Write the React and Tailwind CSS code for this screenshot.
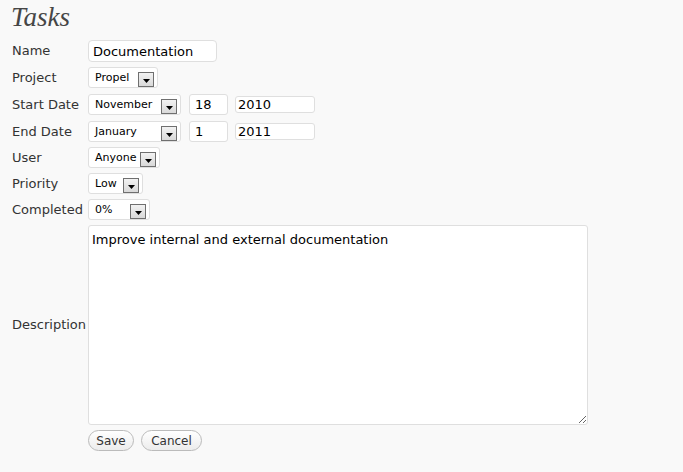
import React from 'react';

const font = { fontFamily: 'Verdana, "DejaVu Sans", sans-serif' };

const Arrow = () => (
  <span className="flex h-[15px] w-[16px] shrink-0 items-center justify-center border border-[#6f6f6f] bg-gradient-to-b from-[#f2f2f2] to-[#d9d9d9]">
    <svg width="7" height="4" viewBox="0 0 7 4" className="mt-[3px]">
      <polygon points="0,0 7,0 3.5,4" fill="#000" />
    </svg>
  </span>
);

const Select = ({ value, width }) => (
  <div
    className={`flex h-[21px] items-center justify-between rounded-[3px] border border-[#dfdfdf] bg-white pl-[6px] pr-[3px] text-[11px] text-black ${width}`}
  >
    <span className="mt-[1px]">{value}</span>
    <span className="mt-[3px]">
      <Arrow />
    </span>
  </div>
);

const Label = ({ children }) => (
  <div className="w-[76px] shrink-0 text-[13px] text-[#333]">{children}</div>
);

const Row = ({ label, className = '', children }) => (
  <div className={`flex items-center ${className}`}>
    <Label>{label}</Label>
    <div className="flex items-center">{children}</div>
  </div>
);

export default function App() {
  return (
    <div className="min-h-[472px] w-full bg-[#f9f9f9] pl-[12px]" style={font}>
      <h1
        className="-ml-[1px] pt-[2px] text-[27px] italic leading-[31px] text-[#464646]"
        style={{ fontFamily: '"Liberation Serif", Georgia, serif' }}
      >
        Tasks
      </h1>

      <div className="mt-[7px] flex flex-col">
        <Row label="Name">
          <input
            readOnly
            value="Documentation"
            className="h-[22px] w-[129px] rounded-[4px] border border-[#dfdfdf] bg-white px-[4px] text-[13px] text-black outline-none"
            style={font}
          />
        </Row>

        <Row label="Project" className="mt-[5px]">
          <Select value="Propel" width="w-[70px]" />
        </Row>

        <Row label="Start Date" className="mt-[6px]">
          <Select value="November" width="w-[93px]" />
          <div className="ml-[8px] flex h-[21px] w-[39px] items-center rounded-[3px] border border-[#dfdfdf] bg-white pl-[5px] text-[13px] text-black">
            18
          </div>
          <div className="ml-[7px] flex h-[17px] w-[80px] items-center rounded-[3px] border border-[#dfdfdf] bg-white pl-[2px] text-[13px] text-black">
            2010
          </div>
        </Row>

        <Row label="End Date" className="mt-[6px]">
          <Select value="January" width="w-[93px]" />
          <div className="ml-[8px] flex h-[21px] w-[39px] items-center rounded-[3px] border border-[#dfdfdf] bg-white pl-[5px] text-[13px] text-black">
            1
          </div>
          <div className="ml-[7px] flex h-[17px] w-[80px] items-center rounded-[3px] border border-[#dfdfdf] bg-white pl-[2px] text-[13px] text-black">
            2011
          </div>
        </Row>

        <Row label="User" className="mt-[5px]">
          <Select value="Anyone" width="w-[72px]" />
        </Row>

        <Row label="Priority" className="mt-[5px]">
          <Select value="Low" width="w-[55px]" />
        </Row>

        <Row label="Completed" className="mt-[5px]">
          <Select value="0%" width="w-[62px]" />
        </Row>

        <Row label="Description" className="mt-[5px]">
          <textarea
            readOnly
            value="Improve internal and external documentation"
            className="block h-[200px] w-[500px] rounded-[3px] border border-[#dfdfdf] bg-white px-[3px] py-[4px] text-[13px] text-black outline-none"
            style={font}
          />
        </Row>

        <div className="mt-[5px] flex gap-[7px] pl-[76px]">
          <button className="h-[21px] w-[46px] rounded-full border border-[#bbb] bg-gradient-to-b from-white to-[#ececec] text-[12px] text-[#333]">
            Save
          </button>
          <button className="h-[21px] w-[61px] rounded-full border border-[#bbb] bg-gradient-to-b from-white to-[#ececec] text-[12px] text-[#333]">
            Cancel
          </button>
        </div>
      </div>
    </div>
  );
}
